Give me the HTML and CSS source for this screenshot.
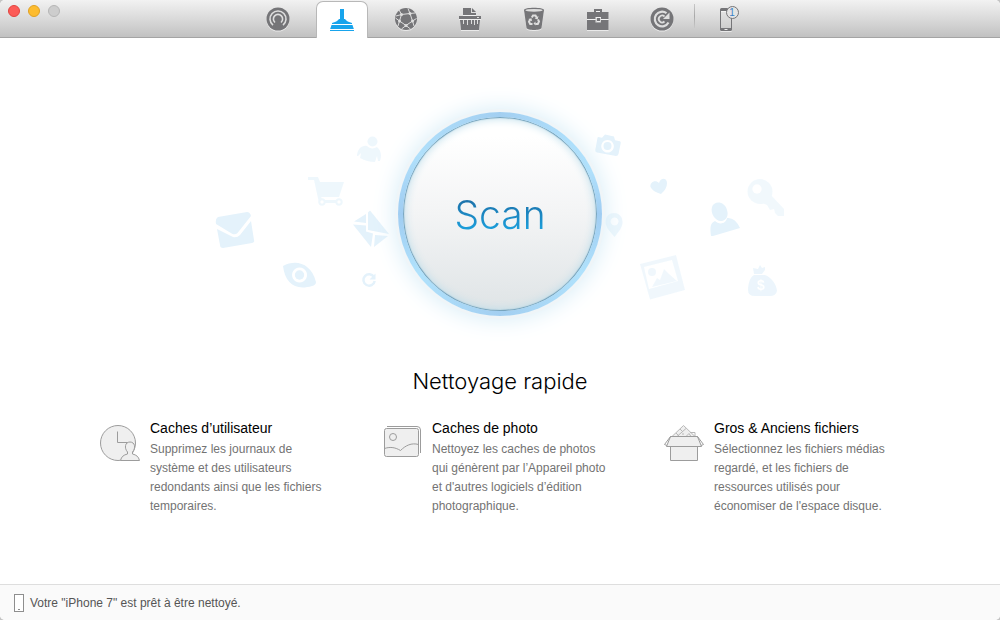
FILE: index.html
```html
<!DOCTYPE html>
<html lang="fr">
  <head>
    <meta charset="UTF-8" />
    <meta name="viewport" content="width=device-width, initial-scale=1.0" />
    <title>Nettoyage rapide</title>
    <link rel="stylesheet" href="styles.css">
  </head>
  <body>
    <div class="window">
      <header class="toolbar">
        <div class="lights">
          <button class="light red" aria-label="Fermer"></button>
          <button class="light yellow" aria-label="Réduire"></button>
          <button class="light grey" aria-label="Agrandir" disabled></button>
        </div>

        <nav class="tabs">
          <button class="tab" aria-label="État">
            <svg viewBox="0 0 24 24">
              <circle class="ink" cx="12" cy="12" r="11.5" />
              <g class="cut-line" stroke-width="1.6">
                <path d="M7 18.200a8 8 0 1 1 10 0" />
                <path d="M9 15.500a4.600 4.600 0 1 1 6 0" />
              </g>
              <path class="ink" d="M12 9.5a2.500 2.500 0 0 1 1.500 4.500L15 21H9l1.500-7A2.500 2.500 0 0 1 12 9.500z" />
            </svg>
          </button>
          <button class="tab active" aria-label="Nettoyage rapide">
            <svg viewBox="0 0 24 24" fill="#18a4ec">
              <path d="M10 1h4v10h1c1 2 4 3 7 4v1H2v-1c3-1 6-2 7-4h1z" />
              <path d="M1.500 17h21l1.300 4H.2z" />
              <path d="M0 22h24v1H0z" />
            </svg>
          </button>
          <button class="tab" aria-label="Internet">
            <svg viewBox="0 0 24 24">
              <circle class="ink" cx="12" cy="12" r="11" />
              <g class="cut-line" stroke-width="1">
                <path d="M7.500 7.500 16 6.500l2.500 7.500-6.500 4.500-6.500-4.500zM7.500 7.500 5 2.800M7.500 7.500 2 9M16 6.500l-2-5M16 6.500l5-.5M18.500 14l4-2.500M18.500 14l1.500 5M12 18.500l-4.500 3.500M12 18.500l4.500 3.500M5.500 14 1.500 11M5.500 14 4 19" />
              </g>
              <g class="cut">
                <circle cx="7.500" cy="7.500" r="1.500" /><circle cx="16" cy="6.500" r="1.500" />
                <circle cx="18.500" cy="14" r="1.500" /><circle cx="12" cy="18.500" r="1.500" />
                <circle cx="5.500" cy="14" r="1.500" />
              </g>
            </svg>
          </button>
          <button class="tab" aria-label="Broyeur">
            <svg viewBox="0 0 24 24">
              <path class="ink" d="M5 1h9l4 4v3H5z" />
              <path class="cut" d="M14 1v4h4v1h-5V1z" />
              <path class="ink" d="M1 9h22v3H1zM2 13h20l-1 10H3z" />
              <path class="cut" d="M19 10h2v1h-2zM5 13h1v4H5zM9 13h1v5H9zM13 13h1v4h-1zM16 13h1v5h-1zM19 13h1v4h-1z" />
            </svg>
          </button>
          <button class="tab" aria-label="Corbeille">
            <svg viewBox="0 0 24 24">
              <path class="ink" d="M2 3c0-3 20-3 20 0l-2.500 18c-1 2.600-14 2.600-15 0z" />
              <ellipse class="cut" cx="12" cy="3.300" rx="8.700" ry="1.400" />
              <g class="cut-line" stroke-width="2">
                <path d="m9.800 10.500 1.200-2h2.500l1.300 2.200M16 12.500l1 2-1.200 2.500h-2.500M10.500 17H8.200L7 14.700l1.300-2.500" />
              </g>
              <path class="cut" d="m16.500 9-.8 3.500-3-1zM13.500 14.500v4l-2-2zM6.300 12l3.200-.8.600 3z" />
            </svg>
          </button>
          <button class="tab" aria-label="Boîte à outils">
            <svg viewBox="0 0 24 24">
              <path class="ink" fill-rule="evenodd" d="M8 2h8v3h6.500v7H15v-2H9.500v2H1V5h7zm2 2v1h4V4z" />
              <path class="ink" fill-rule="evenodd" d="M1 13h8.500v2.500H15V13h7.500v10H1zM11 11h3v3h-3z" />
            </svg>
          </button>
          <button class="tab" aria-label="Restauration">
            <svg viewBox="0 0 24 24">
              <circle class="ink" cx="12" cy="12" r="11.500" />
              <path class="cut-line" stroke-width="2.200" d="M16.500 6.200A7.300 7.300 0 1 0 18.500 15.500" />
              <path class="cut-line" stroke-width="1.800" d="M14.500 14.500A3.400 3.400 0 1 1 14.500 9.500" />
              <path class="cut" d="M19.500 5.500v6.500H13z" />
            </svg>
          </button>
          <span class="divider"></span>
          <button class="tab" aria-label="Appareils, 1 connecté">
            <svg viewBox="0 0 24 24">
              <path class="ink" fill-rule="evenodd" d="M7.500 1h9A1.500 1.500 0 0 1 18 2.500v20a1.500 1.500 0 0 1-1.500 1.500h-9A1.500 1.500 0 0 1 6 22.500v-20A1.500 1.500 0 0 1 7.500 1zM7 4v17h10V4zm3.500 18v1h3v-1z" />
            </svg>
            <span class="badge">1</span>
          </button>
        </nav>
      </header>

      <main class="content">
        <section class="hero">
          <svg class="scene" viewBox="200 88 600 250" fill="#e4f2fb">
            <!-- letter -->
            <path d="m218 216 29-5q3 0 4 4l-13.500 17q-2 2-5 1L216 223q-1-5 2-7z" />
            <path d="m217 228 16 8q4 1 7-2l11-14 3 19q1 2-2 3l-29 5q-3 0-3-3z" />
            <!-- cart -->
            <g opacity=".6">
              <path d="M308 176h10l2 5h24l-5 15h-18l2 3h17v3h-21l-5-23h-6z" />
              <circle cx="322" cy="201" r="2.700" fill="#fff" stroke="#e4f2fb" stroke-width="2" />
              <circle cx="339" cy="201" r="2.700" fill="#fff" stroke="#e4f2fb" stroke-width="2" />
            </g>
            <!-- person -->
            <g opacity=".6">
              <circle cx="372.500" cy="140.500" r="5" />
              <path d="M357 155c0-7 5-11 10-10 3 3 7 3 10 1 4 3 5 9 3 14h-2l-1-5-2 6q-8 0-15-4l1-5-3 3z" />
            </g>
            <!-- envelope -->
            <path d="m370 209.500 19 23.500-21-4v-17.500zM366 213v9l-12-1.500zM353 223.500l13 1v6l7 2-2 13.500zM375 234l13 1-14 11z" />
            <!-- eye -->
            <path fill-rule="evenodd" d="M283 265c13-7 28-3 33 16q0 3-4 4c-17 5-27-3-29-20zm16.500 1.500a7.500 7.500 0 1 0 .1 0z" />
            <circle cx="299.500" cy="274" r="4.700" />
            <!-- reload -->
            <path d="M374 276a5.700 5.700 0 1 0 .7 4" fill="none" stroke="#e4f2fb" stroke-width="2.500" />
            <path d="M375.500 272.500v6h-6z" />
            <!-- camera -->
            <path fill-rule="evenodd" d="m598 136 4 .8 3-3.300 9 2 1 3.800 5 1q1 .5.700 2L618.500 153q-.5 2-2.500 2l-19-3.500q-2-.5-1.700-2.500l2-11q.2-2 .7-2zm9.500 3a6.300 6.300 0 1 0 .1 0z" />
            <circle cx="607.500" cy="145" r="4" />
            <!-- heart -->
            <path d="M661 193c-6-2-9-4-10.500-7-1-5 5-8 8.500-4 2-6 8-5 8 0q0 6-6 11z" />
            <!-- key -->
            <g opacity=".5">
              <path d="m771 194 13 14v7h-6l-3-3-1-4-4 1-3-5-5-2z" />
              <circle cx="760" cy="190.500" r="12.500" />
              <circle cx="757" cy="188" r="4.700" fill="#fff" />
            </g>
            <!-- user -->
            <path d="M712 206c2-7 13-6 15 3 2 6-1 10-5 11-6 1-12-7-10-14zM711 235c-1-8-1-13 4-15 4 4 11 3 12-3q8-1 13 10l-27 8z" />
            <!-- pin -->
            <path opacity=".7" fill-rule="evenodd" d="M614.500 236c-5-6-9-10-9-15 0-12 17-12 17 0 0 5-3 9-8 15zm0-19.500a4 4 0 1 0 .1 0z" />
            <!-- picture -->
            <g opacity=".55">
              <path fill-rule="evenodd" d="m640 263 36-9 9 35-35 9.500zm4 3 5 22 29-8-6-21z" />
              <circle cx="652" cy="271" r="4" />
              <path d="m652 286 5-9 3 2 4-11 5 5 8 7z" />
            </g>
            <!-- money bag -->
            <g opacity=".7">
              <path d="m753 267 5 1 2-4 2 3 3-1v3l-3 4h-8zM754 274h11c6 2 12 10 12 16q-1 5-7 5h-15q-7 0-7-6c0-6 2-13 6-15z" />
              <text class="dollar" x="757" y="289">$</text>
            </g>
          </svg>
          <button class="scan"><span>Scan</span></button>
        </section>

        <h1>Nettoyage rapide</h1>

        <section class="features">
          <article class="feature">
            <svg viewBox="0 0 40 40">
              <circle cx="18" cy="18" r="17.500" />
              <path d="M17.500 6.500v11h10" fill="none" />
              <path d="M20.500 35.500c1-4 3-5.500 7-6.500v-2c-3.500-4-2.500-10 2.500-10s6 6 2.500 10v2c4 1 6 2.500 7 6.500z" />
            </svg>
            <div>
              <h2>Caches d’utilisateur</h2>
              <p>Supprimez les journaux de système et des utilisateurs redondants ainsi que les fichiers temporaires.</p>
            </div>
          </article>
          <article class="feature">
            <svg viewBox="0 0 40 40">
              <path d="M5 1.500h30a3.500 3.500 0 0 1 3.500 3.500v23" fill="none" />
              <rect x="2.500" y="3.500" width="34" height="28" rx="2" />
              <circle cx="11" cy="12" r="3.500" />
              <path d="M2.500 23.500c6-2 11-1 16 2 5-5 11-8 18-6" fill="none" />
            </svg>
            <div>
              <h2>Caches de photo</h2>
              <p>Nettoyez les caches de photos qui génèrent par l’Appareil photo et d'autres logiciels d’édition photographique.</p>
            </div>
          </article>
          <article class="feature">
            <svg viewBox="0 0 40 40">
              <g stroke="#b8b8b8">
                <path d="m8 11.500 11.500-11L31 11.500z" />
                <path d="m13 11.500 9-8M16 4l3 3M12 8l3 3M22 11.500l3-3 2 3M26 7.500h5v4M18 9h2" fill="none" />
              </g>
              <path d="M6.500 11.500h27v10h-27z" />
              <path d="M6.500 21.500h27v14h-27z" />
              <path d="M6.500 11.500h27l4 10h-35z" />
              <path d="m6.500 11.500-6 8 2.500 1M33.500 11.500l6 8-2.500 1" fill="none" />
            </svg>
            <div>
              <h2>Gros &amp; Anciens fichiers</h2>
              <p>Sélectionnez les fichiers médias regardé, et les fichiers de ressources utilisés pour économiser de l'espace disque.</p>
            </div>
          </article>
        </section>
      </main>

      <footer class="status">
        <svg viewBox="0 0 10 18">
          <rect x=".5" y=".5" width="9" height="17" />
          <path d="M4 15.500h2" />
        </svg>
        <span>Votre "iPhone 7" est prêt à être nettoyé.</span>
      </footer>
    </div>
  </body>
</html>
```
FILE: styles.css
```css
* {
  box-sizing: border-box;
}

body {
  margin: 0;
  background: #c4c4c4;
  color: #000;
  font-family: "Liberation Sans", Arial, sans-serif;
}

button {
  padding: 0;
  border: none;
  background: none;
  font: inherit;
  cursor: pointer;
}

h1,
h2,
p {
  margin: 0;
}

.window {
  display: flex;
  flex-direction: column;
  min-height: 100vh;
  background: #fff;
  border-radius: 5px;
  overflow: hidden;
}

/* Toolbar */
.toolbar {
  display: grid;
  grid-template-columns: 1fr auto 1fr;
  height: 38px;
  background: linear-gradient(#f2f2f2, #dcdcdc 45%, #c0c0c0);
  box-shadow: inset 0 -1px #a4a4a4;
}

.lights {
  display: flex;
  gap: 8px;
  padding: 5px 8px;
}

.light {
  width: 12px;
  height: 12px;
  border: 1px solid;
  border-radius: 50%;
}

.red {
  background: #fc5b57;
  border-color: #e0443f;
}

.yellow {
  background: #fdbc2f;
  border-color: #dfa023;
}

.grey {
  background: #cdcdcd;
  border-color: #b5b5b5;
}

.tabs {
  display: flex;
  gap: 12px;
  padding-left: 3px;
}

.tab {
  position: relative;
  display: grid;
  place-items: center;
  width: 52px;
  height: 38px;
}

.tab svg {
  width: 24px;
  height: 24px;
  filter: drop-shadow(0 1px 0 rgba(255, 255, 255, 0.6));
}

.active {
  background: #fff;
  border: 1px solid #b8b8b8;
  border-bottom: none;
  border-radius: 7px 7px 0 0;
  height: 37px;
  margin-top: 1px;
}

.ink {
  fill: #757578;
}

.cut {
  fill: #dedede;
}

.cut-line {
  fill: none;
  stroke: #dedede;
}

.divider {
  width: 1px;
  height: 24px;
  margin: 4px -7px 0 -6px;
  background: linear-gradient(#c8c8c8, #a8a8a8, #c8c8c8);
}

.badge {
  position: absolute;
  top: 6px;
  right: 13px;
  width: 13px;
  height: 13px;
  border: 1px solid #757578;
  border-radius: 50%;
  background: #e4e4e4;
  color: #3b7fc4;
  font-size: 10px;
  line-height: 11px;
  text-align: center;
}

/* Scan area */
.content {
  flex: 1;
  display: flex;
  flex-direction: column;
  align-items: center;
  padding: 51px 20px 24px;
}

.hero {
  display: grid;
  place-items: center;
}

.hero > * {
  grid-area: 1 / 1;
}

.scene {
  width: 600px;
  max-width: 100%;
}

.dollar {
  fill: #fff;
  font-size: 14px;
  font-weight: bold;
}

.scan {
  display: grid;
  place-items: center;
  width: 204px;
  height: 204px;
  padding: 5px;
  border-radius: 50%;
  background: conic-gradient(#a3cff1, #aedffb 12%, #b0e0fb 18%, #a0cdf2 25%, #b0e2fc 35%, #a3cff1 50%, #b0e2fc 65%, #a0cdf2 75%, #b0e0fb 85%, #a3cff1);
  box-shadow: 0 0 0 3px #eff5f8, 0 0 24px 2px #d3ebf6;
}

.scan span {
  display: grid;
  place-items: center;
  width: 100%;
  height: 100%;
  border-radius: 50%;
  background: linear-gradient(#1c6ea6, #1b9fdc) center / 100% 32px no-repeat text,
    linear-gradient(#fff 10%, #f3f4f5 50%, #dfe4e6);
  box-shadow: inset 0 0 1px 1px #6f9fba, inset 0 0 10px 1px #b9dcea;
  color: transparent;
  font-family: Inter, "Liberation Sans", sans-serif;
  font-size: 39px;
  font-weight: 300;
}

h1 {
  margin-top: 28px;
  font-family: Inter, "Liberation Sans", sans-serif;
  font-size: 22px;
  font-weight: 300;
  line-height: 28px;
}

/* Features */
.features {
  display: grid;
  grid-template-columns: repeat(3, 1fr);
  gap: 46px;
  width: 100%;
  max-width: 800px;
  margin-top: 24px;
}

.feature {
  display: flex;
  gap: 10px;
  padding-right: 8px;
}

.feature svg {
  flex: none;
  width: 40px;
  height: 40px;
  margin-top: 6px;
  fill: #efefef;
  stroke: #9c9c9c;
}

h2 {
  margin-bottom: 3px;
  font-size: 14px;
  font-weight: normal;
  line-height: 18px;
}

p {
  color: #737373;
  font-size: 12px;
  line-height: 19px;
}

/* Status bar */
.status {
  display: flex;
  align-items: center;
  gap: 6px;
  height: 36px;
  padding: 0 14px;
  background: #fafafa;
  border-top: 1px solid #dedede;
  color: #555;
  font-size: 12px;
}

.status svg {
  width: 10px;
  height: 18px;
  fill: #fff;
  stroke: #8e8e8e;
}
```
